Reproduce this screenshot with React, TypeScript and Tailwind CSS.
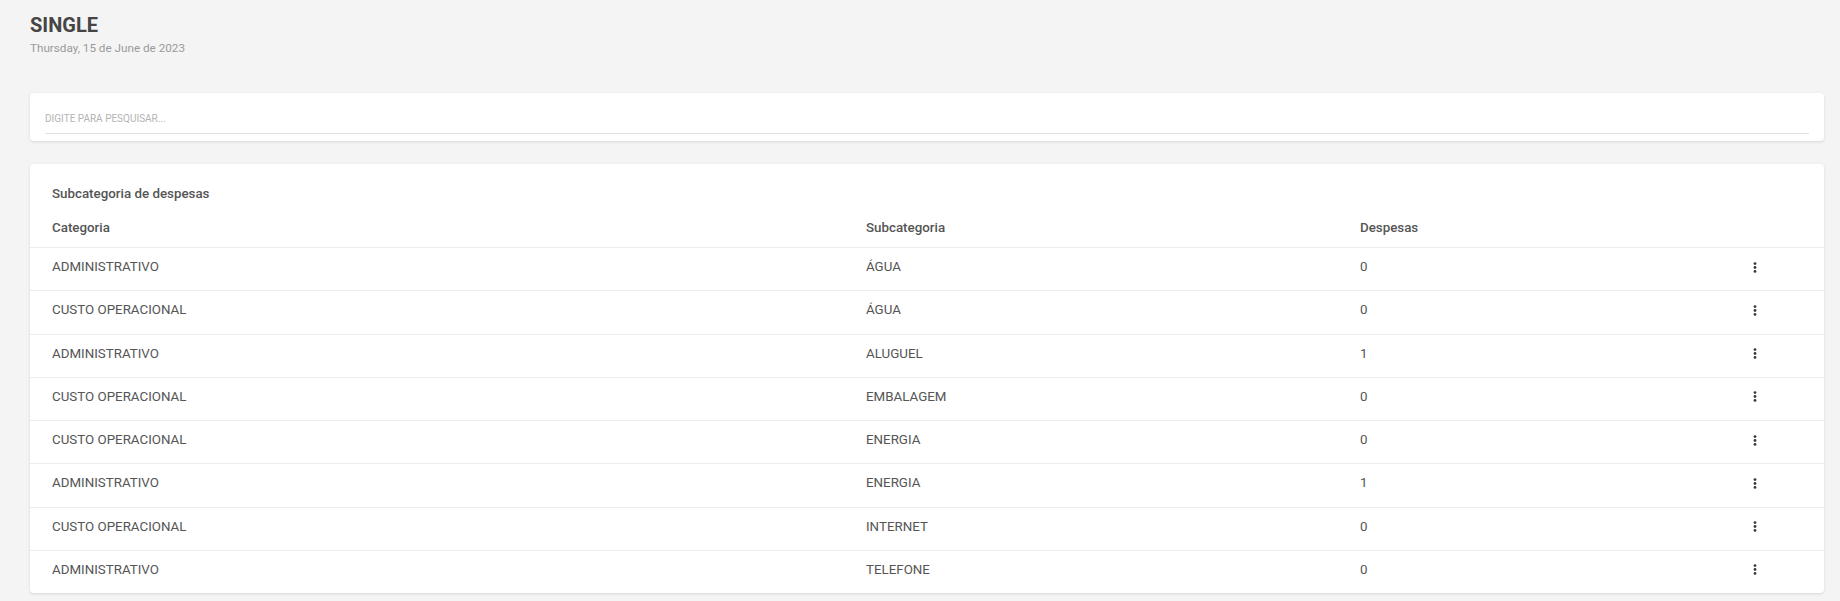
const rows = [
  { categoria: 'ADMINISTRATIVO', subcategoria: 'ÁGUA', despesas: 0 },
  { categoria: 'CUSTO OPERACIONAL', subcategoria: 'ÁGUA', despesas: 0 },
  { categoria: 'ADMINISTRATIVO', subcategoria: 'ALUGUEL', despesas: 1 },
  { categoria: 'CUSTO OPERACIONAL', subcategoria: 'EMBALAGEM', despesas: 0 },
  { categoria: 'CUSTO OPERACIONAL', subcategoria: 'ENERGIA', despesas: 0 },
  { categoria: 'ADMINISTRATIVO', subcategoria: 'ENERGIA', despesas: 1 },
  { categoria: 'CUSTO OPERACIONAL', subcategoria: 'INTERNET', despesas: 0 },
  { categoria: 'ADMINISTRATIVO', subcategoria: 'TELEFONE', despesas: 0 },
];

// small vertical "more" icon
const Kebab = () => (
  <svg width="4" height="11" viewBox="0 0 4 11" className="block">
    <circle cx="2" cy="1.6" r="1.4" fill="#3a3a3a" />
    <circle cx="2" cy="5.5" r="1.4" fill="#3a3a3a" />
    <circle cx="2" cy="9.4" r="1.4" fill="#3a3a3a" />
  </svg>
);

export default function App() {
  return (
    <div className="min-h-[601px] bg-[#f4f4f4] pl-[30px] pr-4 pt-[13px] pb-[7px] font-['Roboto','Liberation_Sans',sans-serif]">
      <h1 className="text-[20px] leading-6 font-bold text-[#454545]">SINGLE</h1>
      <p className="mt-[3px] text-[11.7px] leading-4 text-[#9a9a9a]">Thursday, 15 de June de 2023</p>

      <div className="mt-[37px] bg-white rounded-[4px] shadow-[0_1px_3px_rgba(0,0,0,0.12)] px-[15px] pt-[10px] pb-[7px]">
        <input
          type="text"
          placeholder="DIGITE PARA PESQUISAR..."
          className="block w-full h-[31px] border-b border-[#e2e2e2] text-[10px] text-[#555] placeholder:text-[#b3b3b3] outline-none bg-transparent"
        />
      </div>

      <div className="mt-[23px] bg-white rounded-[4px] shadow-[0_1px_3px_rgba(0,0,0,0.12)] overflow-hidden">
        <h2 className="pl-[22px] pt-[20px] text-[13.33px] leading-5 font-medium text-[#555]">Subcategoria de despesas</h2>

        <div className="mt-[14px] pb-[9px] pl-[22px] grid grid-cols-[814px_494px_1fr_138px] text-[13.33px] leading-5 font-medium text-[#555]">
          <div>Categoria</div>
          <div>Subcategoria</div>
          <div>Despesas</div>
          <div />
        </div>

        {rows.map((r, i) => (
          <div
            key={i}
            className="h-[43.25px] border-t border-[#ececec] pl-[22px] pt-[9px] grid grid-cols-[814px_494px_1fr_138px] items-start text-[13.33px] leading-5 text-[#555]"
          >
            <div>{r.categoria}</div>
            <div>{r.subcategoria}</div>
            <div>{r.despesas}</div>
            <div className="h-5 flex items-center justify-center">
              <Kebab />
            </div>
          </div>
        ))}
      </div>
    </div>
  );
}
